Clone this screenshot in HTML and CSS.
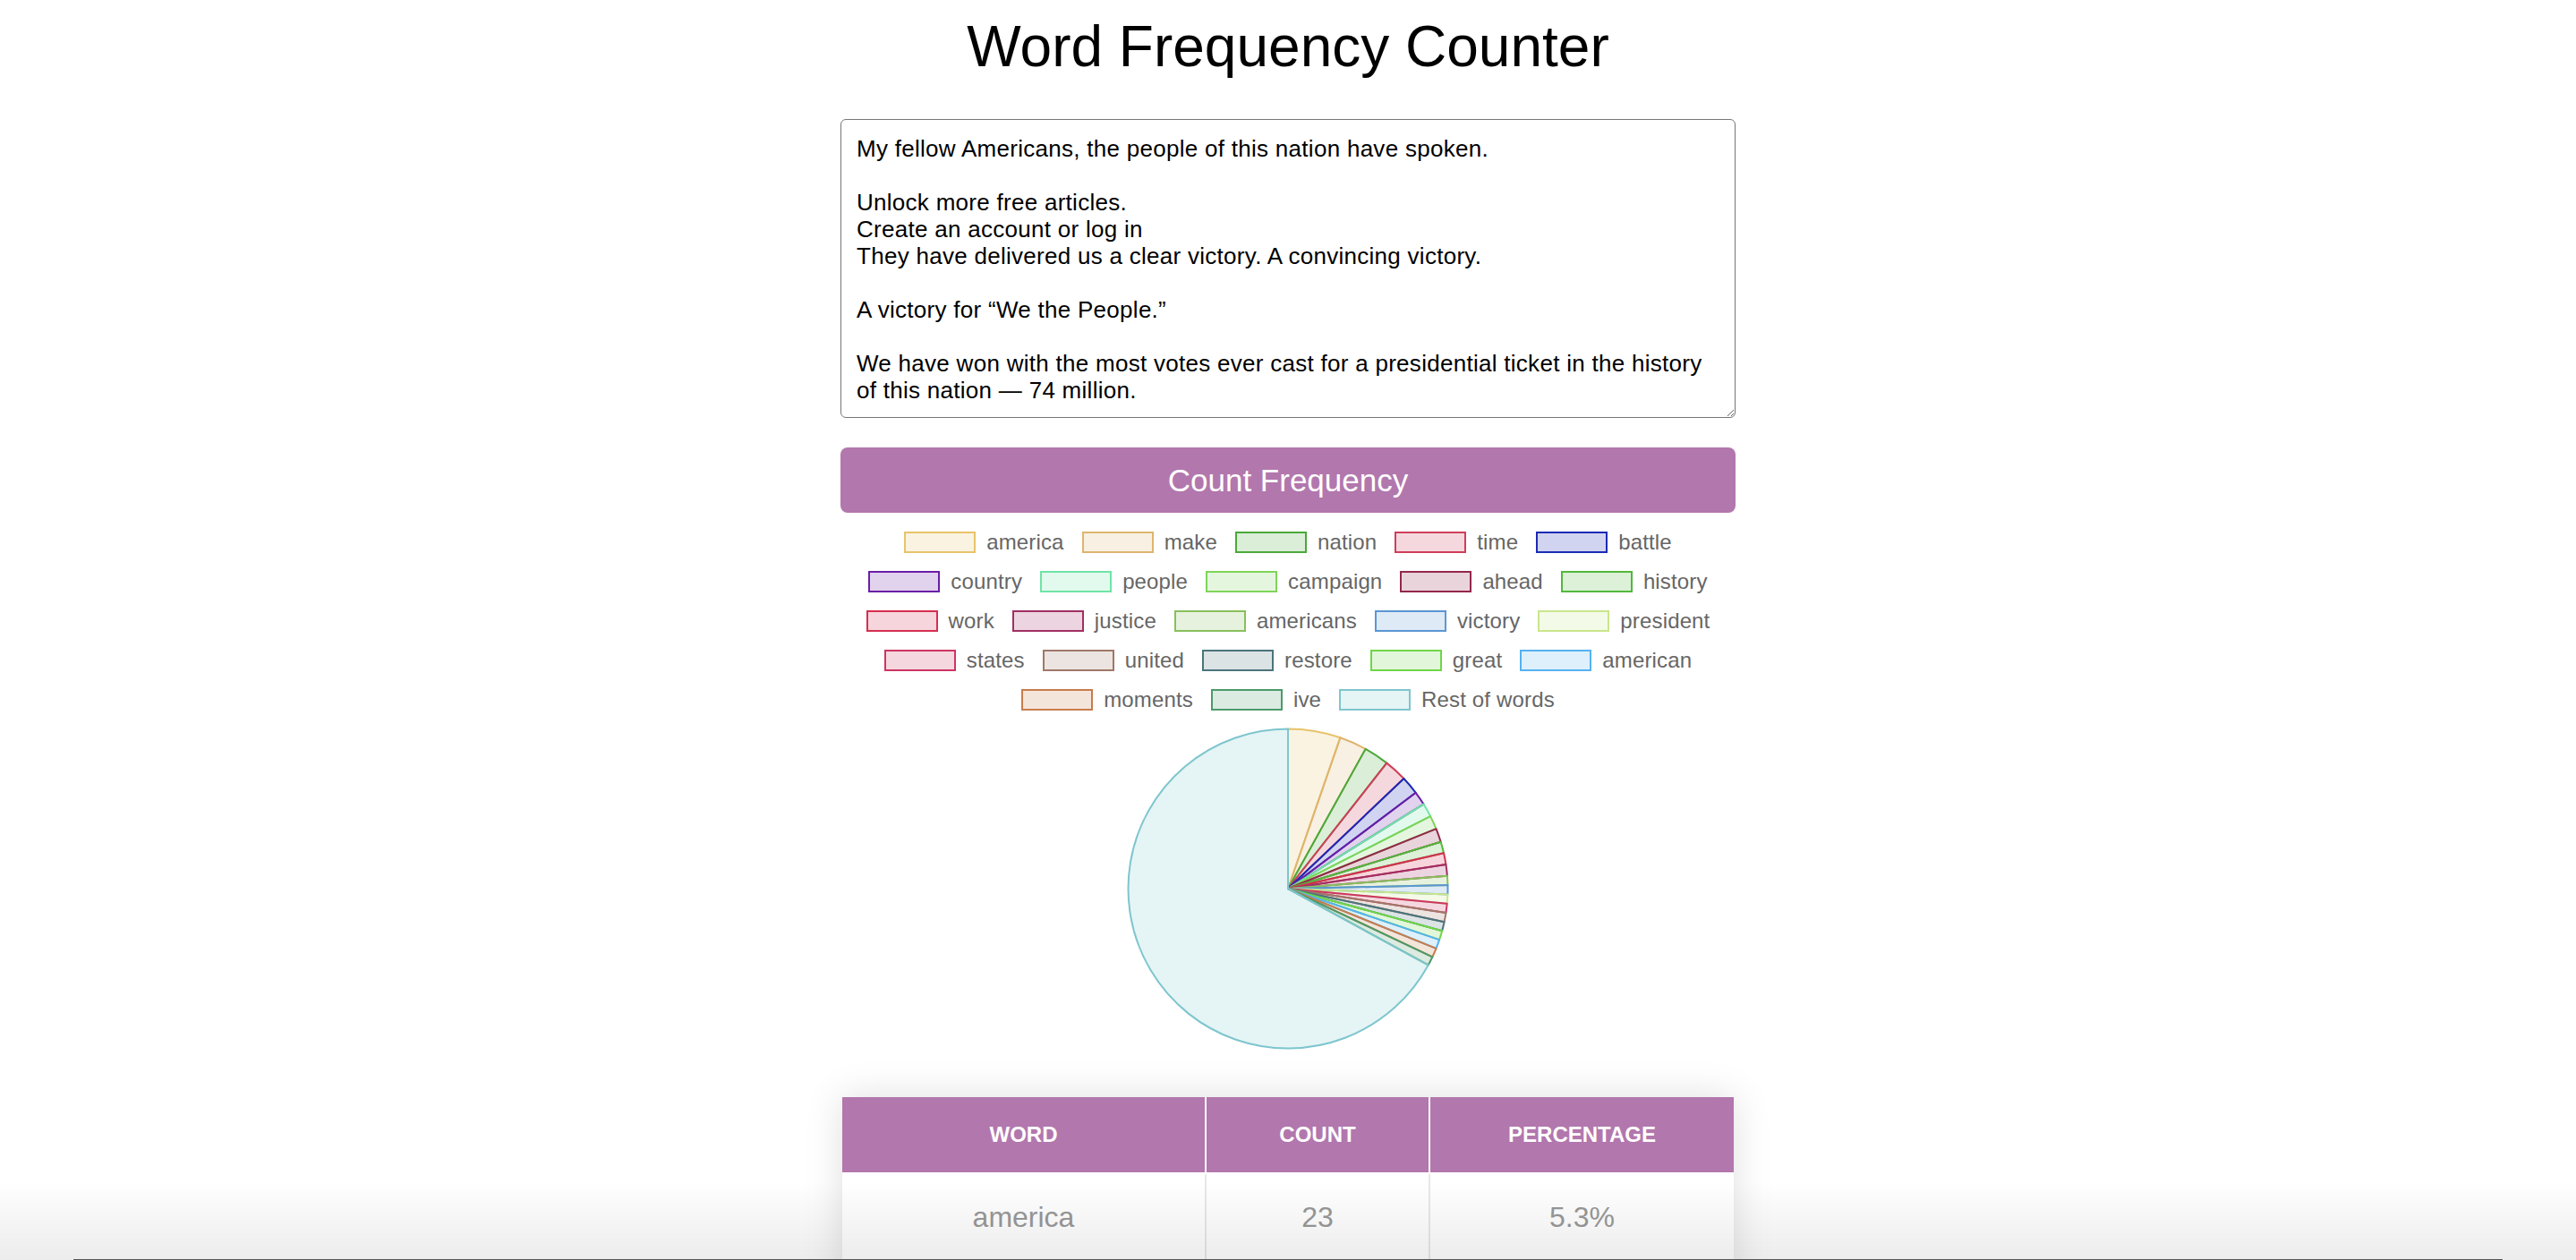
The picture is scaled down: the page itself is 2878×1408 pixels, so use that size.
FILE: index.html
```html
<!DOCTYPE html>
<html lang="en">
<head>
<meta charset="utf-8">
<title>Word Frequency Counter</title>
<link rel="stylesheet" href="styles.css">
</head>
<body>
<main class="page">
  <h1 class="title">Word Frequency Counter</h1>
  <textarea class="input" spellcheck="false">My fellow Americans, the people of this nation have spoken.

Unlock more free articles.
Create an account or log in
They have delivered us a clear victory. A convincing victory.

A victory for “We the People.”

We have won with the most votes ever cast for a presidential ticket in the history of this nation — 74 million.</textarea>
  <button class="count-btn" type="button">Count Frequency</button>

  <section class="chart">
    <div class="legend">
      <div class="legend-row">
        <span class="item c1"><i class="swatch"></i>america</span>
        <span class="item c2"><i class="swatch"></i>make</span>
        <span class="item c3"><i class="swatch"></i>nation</span>
        <span class="item c4"><i class="swatch"></i>time</span>
        <span class="item c5"><i class="swatch"></i>battle</span>
      </div>
      <div class="legend-row">
        <span class="item c6"><i class="swatch"></i>country</span>
        <span class="item c7"><i class="swatch"></i>people</span>
        <span class="item c8"><i class="swatch"></i>campaign</span>
        <span class="item c9"><i class="swatch"></i>ahead</span>
        <span class="item c10"><i class="swatch"></i>history</span>
      </div>
      <div class="legend-row">
        <span class="item c11"><i class="swatch"></i>work</span>
        <span class="item c12"><i class="swatch"></i>justice</span>
        <span class="item c13"><i class="swatch"></i>americans</span>
        <span class="item c14"><i class="swatch"></i>victory</span>
        <span class="item c15"><i class="swatch"></i>president</span>
      </div>
      <div class="legend-row">
        <span class="item c16"><i class="swatch"></i>states</span>
        <span class="item c17"><i class="swatch"></i>united</span>
        <span class="item c18"><i class="swatch"></i>restore</span>
        <span class="item c19"><i class="swatch"></i>great</span>
        <span class="item c20"><i class="swatch"></i>american</span>
      </div>
      <div class="legend-row">
        <span class="item c21"><i class="swatch"></i>moments</span>
        <span class="item c22"><i class="swatch"></i>ive</span>
        <span class="item c23"><i class="swatch"></i>Rest of words</span>
      </div>
    </div>

    <svg class="pie" width="360" height="360" viewBox="0 0 360 360">
      <path class="slice c1" d="M180 180 L180 1.5 A178.5 178.5 0 0 1 238.34 11.30 Z"/>
      <path class="slice c2" d="M180 180 L238.34 11.30 A178.5 178.5 0 0 1 266.63 23.93 Z"/>
      <path class="slice c3" d="M180 180 L266.63 23.93 A178.5 178.5 0 0 1 290.28 39.64 Z"/>
      <path class="slice c4" d="M180 180 L290.28 39.64 A178.5 178.5 0 0 1 309.38 57.01 Z"/>
      <path class="slice c5" d="M180 180 L309.38 57.01 A178.5 178.5 0 0 1 322.72 72.79 Z"/>
      <path class="slice c6" d="M180 180 L322.72 72.79 A178.5 178.5 0 0 1 331.48 85.58 Z"/>
      <path class="slice c7" d="M180 180 L331.48 85.58 A178.5 178.5 0 0 1 339.10 99.08 Z"/>
      <path class="slice c8" d="M180 180 L339.10 99.08 A178.5 178.5 0 0 1 345.52 113.18 Z"/>
      <path class="slice c9" d="M180 180 L345.52 113.18 A178.5 178.5 0 0 1 350.69 127.80 Z"/>
      <path class="slice c10" d="M180 180 L350.69 127.80 A178.5 178.5 0 0 1 354.03 140.28 Z"/>
      <path class="slice c11" d="M180 180 L354.03 140.28 A178.5 178.5 0 0 1 356.44 152.97 Z"/>
      <path class="slice c12" d="M180 180 L356.44 152.97 A178.5 178.5 0 0 1 357.93 165.80 Z"/>
      <path class="slice c13" d="M180 180 L357.93 165.80 A178.5 178.5 0 0 1 358.46 176.12 Z"/>
      <path class="slice c14" d="M180 180 L358.46 176.12 A178.5 178.5 0 0 1 358.38 186.46 Z"/>
      <path class="slice c15" d="M180 180 L358.38 186.46 A178.5 178.5 0 0 1 357.71 196.77 Z"/>
      <path class="slice c16" d="M180 180 L357.71 196.77 A178.5 178.5 0 0 1 356.44 207.03 Z"/>
      <path class="slice c17" d="M180 180 L356.44 207.03 A178.5 178.5 0 0 1 354.58 217.20 Z"/>
      <path class="slice c18" d="M180 180 L354.58 217.20 A178.5 178.5 0 0 1 352.14 227.24 Z"/>
      <path class="slice c19" d="M180 180 L352.14 227.24 A178.5 178.5 0 0 1 349.11 237.12 Z"/>
      <path class="slice c20" d="M180 180 L349.11 237.12 A178.5 178.5 0 0 1 345.52 246.82 Z"/>
      <path class="slice c21" d="M180 180 L345.52 246.82 A178.5 178.5 0 0 1 341.38 256.28 Z"/>
      <path class="slice c22" d="M180 180 L341.38 256.28 A178.5 178.5 0 0 1 336.70 265.49 Z"/>
      <path class="slice c23" d="M180 180 L336.70 265.49 A178.5 178.5 0 1 1 180 1.5 Z"/>
    </svg>
  </section>

  <table class="freq">
    <colgroup>
      <col class="col-word">
      <col class="col-count">
      <col class="col-pct">
    </colgroup>
    <thead>
      <tr><th>Word</th><th>Count</th><th>Percentage</th></tr>
    </thead>
    <tbody>
      <tr><td>america</td><td>23</td><td>5.3%</td></tr>
      <tr><td>make</td><td>12</td><td>2.8%</td></tr>
      <tr><td>nation</td><td>11</td><td>2.5%</td></tr>
      <tr><td>time</td><td>10</td><td>2.3%</td></tr>
      <tr><td>battle</td><td>8</td><td>1.8%</td></tr>
    </tbody>
  </table>
</main>
<div class="window-edge"></div>
</body>
</html>
```

FILE: styles.css
```css
html, body {
  margin: 0;
  padding: 0;
  background: #fff;
}

body {
  font-family: "Liberation Sans", Arial, Helvetica, sans-serif;
  color: #000;
}

.page {
  width: 1000px;
  margin: 0 auto;
  display: flex;
  flex-direction: column;
  align-items: center;
  padding-bottom: 200px;
}

.title {
  margin: 15px 0 0;
  font-size: 64px;
  line-height: 74px;
  font-weight: 400;
  text-align: center;
  color: #000;
}

.input {
  display: block;
  box-sizing: border-box;
  width: 1000px;
  height: 334px;
  margin: 44px 0 0;
  padding: 17px;
  border: 1px solid #767676;
  border-radius: 6px;
  font-family: "Liberation Sans", Arial, Helvetica, sans-serif;
  font-size: 26px;
  line-height: 30px;
  letter-spacing: 0.28px;
  color: #000;
  background: #fff;
  overflow: hidden;
}

.count-btn {
  display: block;
  box-sizing: border-box;
  width: 1000px;
  height: 73px;
  margin: 33px 0 0;
  padding: 0;
  border: none;
  border-radius: 8px;
  background: #b277ad;
  color: #fff;
  font-family: "Liberation Sans", Arial, Helvetica, sans-serif;
  font-size: 35px;
  line-height: 73px;
  text-align: center;
}

.chart {
  display: flex;
  flex-direction: column;
  align-items: center;
  width: 1000px;
}

.legend {
  margin-top: 21px;
  display: flex;
  flex-direction: column;
  gap: 20px;
  width: 100%;
}

.legend-row {
  display: flex;
  justify-content: center;
  align-items: center;
  gap: 20px;
  height: 24px;
}

.item {
  display: flex;
  align-items: center;
  font-size: 24px;
  line-height: 24px;
  letter-spacing: 0.15px;
  color: #666;
  white-space: nowrap;
}

.swatch {
  display: block;
  box-sizing: border-box;
  width: 80px;
  height: 24px;
  margin-right: 12px;
  border: 2px solid var(--c);
  background: var(--f);
}

.pie {
  display: block;
  margin-top: 19px;
  overflow: visible;
}

.slice {
  fill: var(--f);
  stroke: var(--c);
  stroke-width: 2;
  stroke-linejoin: round;
}

.c1  { --c: #e8c36a; --f: rgba(232,195,106,0.2); }
.c2  { --c: #deb56e; --f: rgba(222,181,110,0.2); }
.c3  { --c: #4aa83a; --f: rgba(74,168,58,0.2); }
.c4  { --c: #cf3e5a; --f: rgba(207,62,90,0.2); }
.c5  { --c: #1b2ab5; --f: rgba(27,42,181,0.2); }
.c6  { --c: #6a1fa6; --f: rgba(106,31,166,0.2); }
.c7  { --c: #6ee4a6; --f: rgba(110,228,166,0.2); }
.c8  { --c: #7ed459; --f: rgba(126,212,89,0.2); }
.c9  { --c: #93284a; --f: rgba(147,40,74,0.2); }
.c10 { --c: #52b83b; --f: rgba(82,184,59,0.2); }
.c11 { --c: #d52f50; --f: rgba(213,47,80,0.2); }
.c12 { --c: #a02f63; --f: rgba(160,47,99,0.2); }
.c13 { --c: #88c05c; --f: rgba(136,192,92,0.2); }
.c14 { --c: #5b97d3; --f: rgba(91,151,211,0.2); }
.c15 { --c: #c9e68c; --f: rgba(201,230,140,0.2); }
.c16 { --c: #cd3562; --f: rgba(205,53,98,0.2); }
.c17 { --c: #a07868; --f: rgba(160,120,104,0.2); }
.c18 { --c: #4a747c; --f: rgba(74,116,124,0.2); }
.c19 { --c: #6fd648; --f: rgba(111,214,72,0.2); }
.c20 { --c: #55b2f0; --f: rgba(85,178,240,0.2); }
.c21 { --c: #c97c4b; --f: rgba(201,124,75,0.2); }
.c22 { --c: #4b9b69; --f: rgba(75,155,105,0.2); }
.c23 { --c: #7ec6ce; --f: rgba(126,198,206,0.2); }

.freq {
  margin-top: 53px;
  width: 996px;
  table-layout: fixed;
  border-collapse: separate;
  border-spacing: 0;
  background: #fff;
  box-shadow: 0 0 40px rgba(0, 0, 0, 0.13);
}

.col-word { width: 405px; }
.col-count { width: 250px; }
.col-pct { width: 341px; }

.freq th {
  background: #b277ad;
  color: #fff;
  font-size: 24px;
  line-height: 28px;
  font-weight: 700;
  text-transform: uppercase;
  padding: 28px 10px;
  text-align: center;
  border-bottom: 2px solid #fff;
}

.freq th + th {
  border-left: 2px solid #fff;
}

.freq td {
  font-size: 32px;
  line-height: 37px;
  color: #999;
  text-align: center;
  padding: 30px 10px;
  border-bottom: 2px solid #e8e8e8;
}

.freq td + td {
  border-left: 2px solid #e8e8e8;
}

.window-edge {
  position: fixed;
  left: 0;
  right: 0;
  bottom: 0;
  height: 88px;
  background: linear-gradient(to bottom, rgba(0,0,0,0), rgba(0,0,0,0.075));
  pointer-events: none;
}

.window-edge::after {
  content: "";
  position: absolute;
  left: 82px;
  right: 82px;
  bottom: 0;
  height: 1px;
  background: #555;
}
```
